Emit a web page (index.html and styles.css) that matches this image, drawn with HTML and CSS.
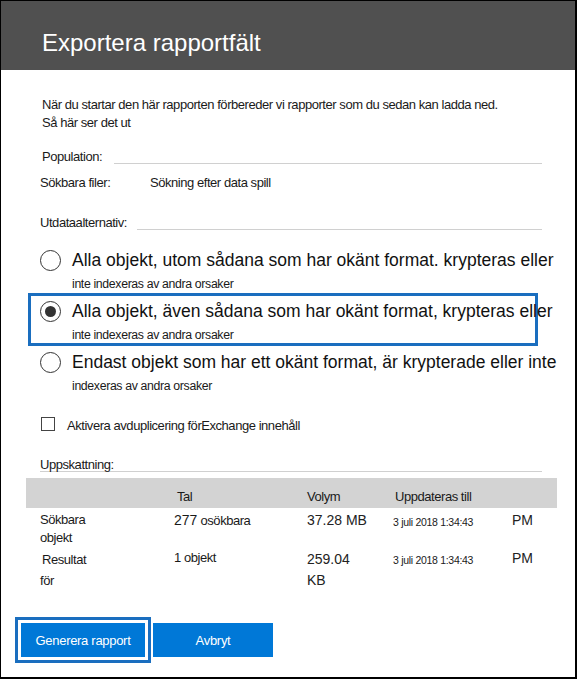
FILE: index.html
```html
<!DOCTYPE html>
<html lang="sv">
<head>
<meta charset="utf-8">
<title>Exportera rapportfält</title>
<link rel="stylesheet" href="styles.css">
</head>
<body>
<div class="dialog">
  <header class="head">
    <h1 class="title">Exportera rapportfält</h1>
  </header>
  <main class="body">
    <p class="intro">När du startar den här rapporten förbereder vi rapporter som du sedan kan ladda ned.<br>Så här ser det ut</p>

    <div class="section pop">
      <span class="label">Population:</span>
      <span class="rule"></span>
    </div>
    <div class="kv">
      <span class="k">Sökbara filer:</span>
      <span class="v">Sökning efter data spill</span>
    </div>

    <div class="section out">
      <span class="label">Utdataalternativ:</span>
      <span class="rule"></span>
    </div>

    <div class="options">
      <div class="opt">
        <span class="radio"></span>
        <div class="opt-text">
          <div class="opt-main">Alla objekt, utom sådana som har okänt format. krypteras eller</div>
          <div class="opt-sub">inte indexeras av andra orsaker</div>
        </div>
      </div>
      <div class="opt selected">
        <span class="radio checked"></span>
        <div class="opt-text">
          <div class="opt-main">Alla objekt, även sådana som har okänt format, krypteras eller</div>
          <div class="opt-sub">inte indexeras av andra orsaker</div>
        </div>
      </div>
      <div class="opt">
        <span class="radio"></span>
        <div class="opt-text">
          <div class="opt-main">Endast objekt som har ett okänt format, är krypterade eller inte</div>
          <div class="opt-sub">indexeras av andra orsaker</div>
        </div>
      </div>
    </div>

    <label class="check">
      <span class="box"></span>
      <span class="check-label">Aktivera avduplicering förExchange innehåll</span>
    </label>

    <div class="section est">
      <span class="label">Uppskattning:</span>
    </div>

    <div class="table">
      <div class="thead">
        <span class="c1"></span>
        <span class="c2">Tal</span>
        <span class="c3">Volym</span>
        <span class="c4">Uppdateras till</span>
        <span class="c5"></span>
      </div>
      <div class="trow">
        <span class="c1">Sökbara<br>objekt</span>
        <span class="c2"><span class="num">277</span> osökbara</span>
        <span class="c3 big">37.28 MB</span>
        <span class="c4 date">3 juli 2018 1:34:43</span>
        <span class="c5 big">PM</span>
      </div>
      <div class="trow r2">
        <span class="c1">Resultat<br><span class="low">för</span></span>
        <span class="c2">1 objekt</span>
        <span class="c3 big">259.04<br><span class="low">KB</span></span>
        <span class="c4 date">3 juli 2018 1:34:43</span>
        <span class="c5 big">PM</span>
      </div>
    </div>

    <div class="actions">
      <span class="focus"><button class="btn btn-main" type="button">Generera rapport</button></span>
      <button class="btn btn-cancel" type="button">Avbryt</button>
    </div>
  </main>
</div>
</body>
</html>
```

FILE: styles.css
```css
* { box-sizing: border-box; }
html, body { margin: 0; padding: 0; background: #fff; }
body { font-family: "Liberation Sans", Arial, sans-serif; color: #1a1a1a; }

.dialog {
  width: 577px;
  height: 679px;
  border: 1px solid #000;
  border-right-width: 2px;
  border-bottom-width: 2px;
  overflow: hidden;
}

.head {
  height: 69px;
  background: #505050;
  padding: 27px 0 0 41px;
}
.title {
  margin: 0;
  font-size: 24px;
  font-weight: 400;
  line-height: 30px;
  color: #fff;
}

.intro {
  margin: 26px 0 0 41px;
  font-size: 13px;
  line-height: 18px;
  letter-spacing: -0.45px;
}

.section {
  display: flex;
  align-items: flex-end;
  margin-left: 41px;
  margin-right: 33px;
  font-size: 13px;
  letter-spacing: -0.45px;
}
.section .label { padding-right: 12px; line-height: 15px; }
.section .rule { flex: 1; border-bottom: 1px solid #d0d0d0; height: 1px; }
.pop { margin-top: 17px; }
.out { margin-top: 25px; margin-left: 39px; }
.out .label { padding-right: 10px; }

.kv {
  display: flex;
  margin: 11px 0 0 39px;
  font-size: 13px;
  letter-spacing: -0.45px;
}
.kv .k { width: 110px; }

.options { margin-top: 12px; }
.opt {
  display: flex;
  align-items: flex-start;
  margin-left: 27px;
  width: 510px;
  border: 3px solid transparent;
  padding: 4px 0 0 9px;
}
.opt + .opt { margin-top: -2px; }
.opt.selected { border-color: #1a6ebf; }
.radio {
  flex: none;
  width: 21px;
  height: 21px;
  border: 1.5px solid #333;
  border-radius: 50%;
  margin-top: 1px;
  margin-right: 11px;
  position: relative;
}
.radio.checked::after {
  content: "";
  position: absolute;
  left: 3.5px;
  top: 3.5px;
  width: 11px;
  height: 11px;
  border-radius: 50%;
  background: #333;
}
.opt-text { white-space: nowrap; }
.opt-main { font-size: 17.5px; line-height: 22px; color: #111; }
.opt-sub { font-size: 12.3px; line-height: 15px; letter-spacing: -0.35px; padding-top: 6px; }

.check {
  display: flex;
  align-items: center;
  margin: 21px 0 0 40px;
  font-size: 13px;
  letter-spacing: -0.45px;
}
.box {
  width: 14px;
  height: 14px;
  border: 1px solid #444;
  margin-right: 12px;
  margin-top: -4px;
}

.est { margin-top: 25px; margin-left: 39px; border-bottom: 1px solid #d0d0d0; }
.est .label { line-height: 13px; }

.table { margin: 6px 18px 0 25px; font-size: 13px; letter-spacing: -0.45px; }
.thead, .trow { display: flex; }
.thead { background: #d3d3d3; height: 30px; align-items: center; padding-top: 6px; }
.c1 { width: 148px; padding-left: 14px; }
.c2 { width: 133px; }
.c3 { width: 86px; }
.c4 { width: 119px; }
.c5 { flex: 1; }
.thead .c2 { padding-left: 3px; }
.thead .c4 { padding-left: 2px; }
.trow { padding-top: 3px; line-height: 18px; }
.num { font-size: 14px; letter-spacing: 0; }
.big { font-size: 14px; letter-spacing: 0; color: #222; }
.date { font-size: 10.5px; letter-spacing: -0.3px; padding-top: 2px; }
.r2 { padding-top: 2px; }
.r2 .c1 { padding-left: 16px; line-height: 21px; }
.r2 .c1 .low { margin-left: -2px; }
.r2 .c3 { line-height: 21px; }

.actions {
  display: flex;
  align-items: center;
  margin: 26px 0 0 14px;
  gap: 2px;
}
.focus {
  display: inline-flex;
  border: 3px solid #1a6ebf;
  padding: 3px;
}
.btn {
  font-family: "Liberation Sans", Arial, sans-serif;
  font-size: 13px;
  letter-spacing: -0.3px;
  color: #fff;
  background: #0078d7;
  border: 0;
  height: 34px;
  padding: 0;
}
.btn-main { width: 124px; }
.btn-cancel { width: 120px; }
```
